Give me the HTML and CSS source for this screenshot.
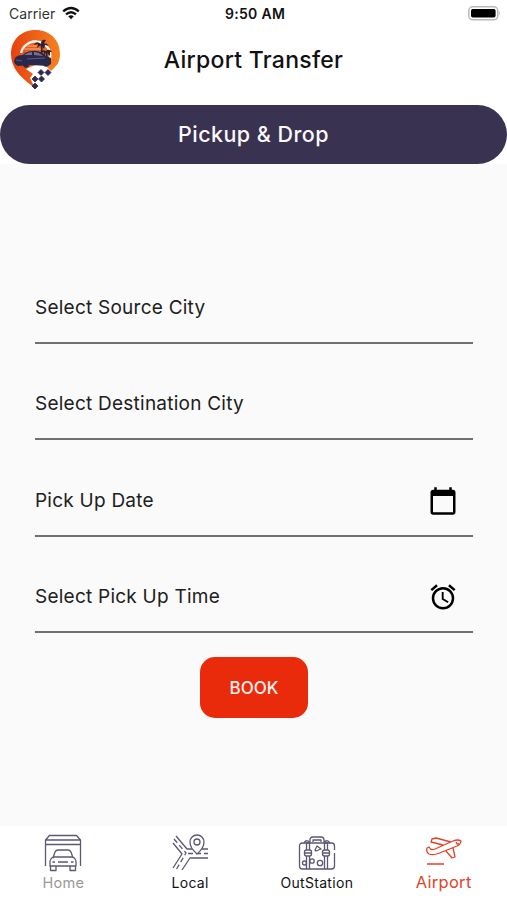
FILE: index.html
```html
<!DOCTYPE html>
<html lang="en">
<head>
<meta charset="utf-8">
<title>Airport Transfer</title>
<link rel="stylesheet" href="styles.css">
</head>
<body>
<div class="app">
  <header class="top">
    <div class="status">
      <div class="carrier"><span>Carrier</span>
        <svg width="18" height="14" viewBox="0 0 18 14" fill="none" stroke="#111" stroke-width="2.4"><path d="M1.200 5.300Q9-1.500 16.800 5.300M4 8.400Q9 4 14 8.400"/><path d="M6.200 10.300Q9 8 11.800 10.300L9 13.200Z" fill="#111" stroke="none"/></svg>
      </div>
      <span class="time">9:50 AM</span>
      <svg class="battery" width="33" height="15" viewBox="0 0 33 15"><rect x=".8" y=".8" width="29" height="13" rx="4" fill="#fff" stroke="#b9b9b9" stroke-width="1.500"/><rect x="3" y="3" width="24.600" height="8.600" rx="1.800"/><path d="M31.200 5.300q1.500 2 0 4z" fill="#999"/></svg>
    </div>
    <div class="titlebar">
      <svg class="logo" width="52" height="62" viewBox="0 0 52 62">
        <defs><linearGradient id="pin" x1="0" x2="1"><stop offset="0" stop-color="#e6410f"/><stop offset="1" stop-color="#f58220"/></linearGradient></defs>
        <path d="M25.500 1C11 1 1 11 1 25c0 13 8 22 21 32l3 2 3-3 2-6 12-8c5-5 8-10 8-17C50 11 40 1 25.500 1Z" fill="url(#pin)"/>
        <path d="M16 40q10-6 27-5l6 2-12 16-13 9-1-7-3-6 3-4z" fill="#fff"/>
        <path d="M36 37q8-3 13-7-1 6-8 12z" fill="#f47b20"/>
        <path d="M11 24a15 15 0 0 1 29-1q1 6-1 10" fill="none" stroke="#fff" stroke-width="2.200"/>
        <path d="M16 17h14M13 20h18M16 23h15" stroke="#ffc2a6" stroke-width=".8"/>
        <path d="M30 28q3-7 1-13m6 15q0-4-1-8" stroke="#2d2035" stroke-width="1.700" fill="none"/>
        <path d="M31 15q-5-4-7 1l4-1-1 4 4-3 3 4 1-4 4 1q-2-3-5-3l2-3q-5-1-5 4m5 7q-4-2-5 2l3-1 0 4 2-4 4 4v-4h2q-3-4-6-1z" fill="#2d2035"/>
        <path d="M5 29q2-3 8-3 3-4 9-4 9-1 14 5l5 2v6l-3 2-17-1-13 1q-4-2-4-5Z" fill="#29274c"/>
        <path d="M14 26q4-3 8-3v3zm10-3q5 0 9 4l-9-1z" fill="#77708d"/>
        <path d="M6 31l6 1m5-2 18-1" stroke="#615978"/>
        <g fill="#29274c"><circle cx="16" cy="36" r="2.800"/><circle cx="36" cy="35" r="2.800"/></g>
        <path d="M31 40.500l3 3-3 3-3-3zm7 0l3 3-3 3-3-3zm-13 6.500l3 3-3 3-3-3zm6.500 0l3 3-3 3-3-3zm-6.500 7l3 3-3 3-3-3z" fill="#2c2a50" stroke="#2c2a50" stroke-linejoin="round" stroke-width=".8"/>
      </svg>
      <h1>Airport Transfer</h1>
    </div>
    <div class="banner">Pickup &amp; Drop</div>
  </header>
  <main>
    <div class="field"><span class="source">Select Source City</span></div>
    <div class="field"><span class="destination">Select Destination City</span></div>
    <div class="field"><span class="date">Pick Up Date</span>
      <svg width="30" height="30" viewBox="0 0 24 24"><path d="M20 3h-1V1h-2v2H7V1H5v2H4c-1.100 0-2 .9-2 2v16c0 1.100.9 2 2 2h16c1.100 0 2-.9 2-2V5c0-1.100-.9-2-2-2zm0 18H4V8h16v13z"/></svg></div>
    <div class="field"><span class="pick-time">Select Pick Up Time</span>
      <svg width="30" height="30" viewBox="0 0 24 24"><path d="M22 5.720l-4.600-3.860-1.290 1.530 4.600 3.860L22 5.720zM7.880 3.390L6.600 1.860 2 5.710l1.290 1.530 4.590-3.850zM12.500 8H11v6l4.750 2.850.75-1.230-4-2.370V8zM12 4c-4.970 0-9 4.030-9 9s4.020 9 9 9a9 9 0 1 0 0-18zm0 16a7 7 0 1 1 0-14 7 7 0 0 1 0 14z"/></svg></div>
    <button class="book">BOOK</button>
  </main>
  <nav>
    <div class="tab home">
      <svg width="38" height="38" viewBox="0 0 38 38"><path d="M1.500 32V6l4-4.500h27l4 4.500v26M1.500 6h35M1.500 10.500h35"/><path d="M9 24l2-6q1-2 3-2h10q2 0 3 2l2 6M9 23q-3 2-3 5v4h26v-4q0-3-3-5zM6.500 32v4.500H12V32m14 0v4.500h5.500V32M14 28h10M8.500 28H11m16 0h2.500"/></svg>
      <span>Home</span></div>
    <div class="tab local">
      <svg width="38" height="38" viewBox="0 0 38 38"><path d="M5 2l11 13h5M2 9l9 11L2 34M11 36l8-12h18M31 15h6"/><path d="M3 5l12 14L5 36M17 19.500h20" stroke-dasharray="5 3"/><path d="M26 20q-7-6-7-12a7 7 0 0 1 14 0q0 6-7 12z" fill="#fff"/><circle cx="26" cy="8" r="3"/></svg>
      <span>Local</span></div>
    <div class="tab outstation">
      <svg width="38" height="38" viewBox="0 0 38 38"><path d="M36.500 16V12q0-3-3-3h-29q-3 0-3 3v20q0 3 3 3h29q3 0 3-3V19"/><path d="M12 8V6q0-3 3-3h8q3 0 3 3v2m-11 0V6h8v2M8.500 35V9h3v26m15 0V9h3v26M6 9q1-3 4-2l2 2m14 0q1-3 4-2l2 2"/><g fill="#fff"><rect x="6.500" y="16" width="7" height="6" rx="2"/><rect x="24.500" y="16" width="7" height="6" rx="2"/></g><path d="M7 19h6m12 0h6M17 16l2-4 4 3-5 2z"/><circle cx="22" cy="29" r="2.700"/><circle cx="14" cy="27" r="2.200"/><circle cx="6.500" cy="29" r="2"/></svg>
      <span>OutStation</span></div>
    <div class="tab airport">
      <svg width="38" height="38" viewBox="0 0 38 38"><path d="M2 14l2-1q2 4 6 2l18-8q5-2 8 0 0 3-4 5l-15 6Q8 22 4 20 1 18 2 14zM18 11L6 8 7 5l4-1 15 4M21 17l6 7 3-1-2-9M2 30h17"/><path d="M31 8l1 2h2"/></svg>
      <span>Airport</span></div>
  </nav>
</div>
</body>
</html>
```
FILE: styles.css
```css
* { box-sizing: border-box; }
body { margin: 0; font-family: Inter, "Liberation Sans", sans-serif; color: #111; background: #fafafa; }
svg { display: block; flex: none; }
.app { height: 900px; display: flex; flex-direction: column; }
.top { height: 164px; background: #fff; }
.status { height: 28px; display: grid; grid-template-columns: 1fr auto 1fr; align-items: center; padding: 0 6px 2px 9px; font-size: 14px; }
.carrier { display: flex; gap: 7px; align-items: center; color: #333; }
.carrier span { letter-spacing: .05px; }
.time { font-weight: 600; letter-spacing: .3px; }
.battery { justify-self: end; }
.titlebar { height: 77px; display: grid; grid-template-columns: 52px 1fr 52px; padding: 0 10px; align-items: start; }
.logo { margin-top: 1px; }
h1 { margin: 16px 0 0; font-size: 23px; line-height: 32px; font-weight: 500; letter-spacing: .28px; text-align: center; }
.banner { height: 59px; border-radius: 30px; background: #393351; color: #fafafa; display: flex; align-items: center; justify-content: center; font-size: 21.500px; font-weight: 500; letter-spacing: .45px; padding-bottom: 2px; }
main { flex: 1; padding: 83px 34px 0 35px; display: flex; flex-direction: column; }
.field { height: 96.500px; display: flex; align-items: flex-end; justify-content: space-between; border-bottom: 2px solid #707070; padding: 0 15px 19px 0; color: #202020; font-size: 19px; line-height: 30px; letter-spacing: .24px; }
.book { align-self: center; margin-top: 24px; width: 108px; height: 61px; border: 0; border-radius: 15px; background: #e92b0c; color: #fff0ec; font: 500 17px Inter, sans-serif; }
nav { height: 74px; display: grid; grid-template-columns: repeat(4, 1fr); background: #fff; padding-top: 8px; }
.tab { display: flex; flex-direction: column; align-items: center; font-size: 14px; line-height: 22px; letter-spacing: .3px; }
.tab svg { fill: none; stroke: #5b5873; stroke-width: 1.300; stroke-linejoin: round; }
.home { color: #999; font-size: 14.500px; }
.airport { color: #e04428; font-size: 16.500px; line-height: 20px; }
.airport svg { stroke: #e04428; }
```
